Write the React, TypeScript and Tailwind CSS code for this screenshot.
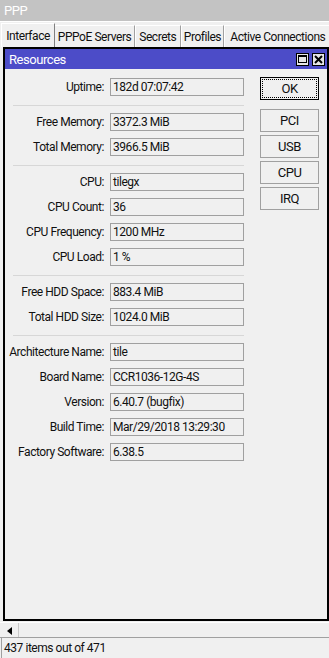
import React from "react";

const groups: [string, string][][] = [
  [["Uptime", "182d 07:07:42"]],
  [
    ["Free Memory", "3372.3 MiB"],
    ["Total Memory", "3966.5 MiB"],
  ],
  [
    ["CPU", "tilegx"],
    ["CPU Count", "36"],
    ["CPU Frequency", "1200 MHz"],
    ["CPU Load", "1 %"],
  ],
  [
    ["Free HDD Space", "883.4 MiB"],
    ["Total HDD Size", "1024.0 MiB"],
  ],
  [
    ["Architecture Name", "tile"],
    ["Board Name", "CCR1036-12G-4S"],
    ["Version", "6.40.7 (bugfix)"],
    ["Build Time", "Mar/29/2018 13:29:30"],
    ["Factory Software", "6.38.5"],
  ],
];

function Row({ label, value }: { label: string; value: string }) {
  return (
    <div className="flex items-center h-[18px]">
      <div className="w-[99px] text-right whitespace-nowrap leading-none">{label}:</div>
      <div className="ml-[6px] w-[134px] h-[18px] border border-[#a0a0a0] flex items-center pl-[2px] whitespace-nowrap leading-none">
        {value}
      </div>
    </div>
  );
}

function Btn({ label }: { label: string }) {
  return (
    <div className="w-[59px] h-[23px] border border-[#a0a0a0] bg-[#f0f0f0] flex items-center justify-center leading-none">
      {label}
    </div>
  );
}

export default function App() {
  return (
    <div className="w-[329px] h-[658px] bg-[#f0f0f0] flex flex-col overflow-hidden text-[12px] tracking-[-0.45px] text-[#111] font-[Roboto,'Liberation_Sans',sans-serif]">
      {/* app title */}
      <div className="h-[21px] bg-[#c3c3c3] text-white flex items-center pl-[4px] leading-none text-[13px]">PPP</div>
      <div className="h-[1px] bg-white" />
      {/* tabs */}
      <div className="h-[25px] flex items-start pl-[1px] whitespace-nowrap">
        <div className="mt-[1px] h-[24px] w-[57px] border-l border-t border-white border-r border-r-[#808080] bg-[#f0f0f0] flex items-center justify-center leading-none">
          Interface
        </div>
        <div className="mt-[3px] h-[22px] w-[84px] border-t border-white border-r border-r-[#a0a0a0] flex items-center justify-center leading-none">
          PPPoE Servers
        </div>
        <div className="mt-[3px] h-[22px] w-[48px] border-l border-t border-white border-r border-r-[#a0a0a0] flex items-center justify-center leading-none">
          Secrets
        </div>
        <div className="mt-[3px] h-[22px] w-[46px] border-l border-t border-white border-r border-r-[#a0a0a0] flex items-center justify-center leading-none">
          Profiles
        </div>
        <div className="mt-[3px] h-[22px] w-[110px] border-l border-t border-white flex items-center pl-[5px] leading-none">
          Active Connections
        </div>
      </div>
      {/* window */}
      <div className="ml-[3px] w-[326px] h-[574px] border-2 border-black flex flex-col bg-[#f0f0f0]">
        <div className="h-[20px] bg-[#4c4cc8] flex items-center text-white pl-[4px] text-[13px]">
          <span className="leading-none">Resources</span>
          <div className="ml-auto mr-[2px] flex gap-[3px]">
            <div className="w-[13px] h-[13px] border border-black bg-[#e6e6e6] flex items-center justify-center">
              <div className="w-[9px] h-[8px] border border-black border-t-2" />
            </div>
            <div className="w-[13px] h-[13px] border border-black bg-[#e6e6e6] flex items-center justify-center">
              <svg width="9" height="9" viewBox="0 0 9 9">
                <path d="M1 1 L8 8 M8 1 L1 8" stroke="black" strokeWidth="2" />
              </svg>
            </div>
          </div>
        </div>
        <div className="flex">
          <div className="pt-[9px] flex flex-col">
            {groups.map((g, gi) => (
              <div key={gi} className="flex flex-col">
                {gi > 0 && <div className="ml-[8px] w-[231px] h-[1px] bg-[#d7d7d7] mt-[9px] mb-[7px]" />}
                <div className="flex flex-col gap-[7px]">
                  {g.map(([l, v]) => (
                    <Row key={l} label={l} value={v} />
                  ))}
                </div>
              </div>
            ))}
          </div>
          <div className="ml-[16px] pt-[8px] flex flex-col text-[13px]">
            <div className="w-[59px] h-[23px] border border-black bg-[#f0f0f0] p-[1px]">
              <div className="w-full h-full border border-dotted border-black flex items-center justify-center leading-none">
                OK
              </div>
            </div>
            <div className="mt-[9px] flex flex-col gap-[3px]">
              <Btn label="PCI" />
              <Btn label="USB" />
              <Btn label="CPU" />
              <Btn label="IRQ" />
            </div>
          </div>
        </div>
      </div>
      {/* scroll row */}
      <div className="mt-[1px] h-[15px] border-t border-white flex">
        <div className="ml-[2px] w-[17px] h-[15px] border-r border-[#c8c8c8] flex items-center justify-center">
          <svg width="8" height="8" viewBox="0 0 8 8">
            <path d="M1 4 L6 0 L6 8 Z" fill="black" />
          </svg>
        </div>
      </div>
      <div className="h-[1px] bg-[#a0a0a0]" />
      <div className="flex-1 flex items-center pl-[2px] ml-[1px] border-l border-[#a0a0a0] leading-none">
        437 items out of 471
      </div>
    </div>
  );
}
